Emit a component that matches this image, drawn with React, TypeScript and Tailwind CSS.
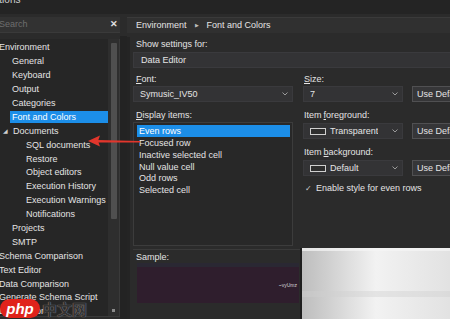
import React from "react";

type Node = { t: string; lvl: number; sel?: boolean; exp?: boolean };

const tree: Node[] = [
  { t: "Environment", lvl: 0 },
  { t: "General", lvl: 1 },
  { t: "Keyboard", lvl: 1 },
  { t: "Output", lvl: 1 },
  { t: "Categories", lvl: 1 },
  { t: "Font and Colors", lvl: 1, sel: true },
  { t: "Documents", lvl: 1, exp: true },
  { t: "SQL documents", lvl: 2 },
  { t: "Restore", lvl: 2 },
  { t: "Object editors", lvl: 2 },
  { t: "Execution History", lvl: 2 },
  { t: "Execution Warnings", lvl: 2 },
  { t: "Notifications", lvl: 2 },
  { t: "Projects", lvl: 1 },
  { t: "SMTP", lvl: 1 },
  { t: "Schema Comparison", lvl: 0 },
  { t: "Text Editor", lvl: 0 },
  { t: "Data Comparison", lvl: 0 },
  { t: "Generate Schema Script", lvl: 0 },
  { t: "Data Editor", lvl: 0 },
];

const items = ["Even rows", "Focused row", "Inactive selected cell", "Null value cell", "Odd rows", "Selected cell"];

function Chevron() {
  return (
    <svg width="6" height="4" viewBox="0 0 6 4" className="shrink-0">
      <path d="M0.5 0.5 L3 3 L5.5 0.5" stroke="#9a9a9a" strokeWidth="1" fill="none" />
    </svg>
  );
}

function Combo({ w, children }: { w: string; children: React.ReactNode }) {
  return (
    <div className={`${w} h-[16px] bg-[#333335] border border-[#3a3a3d] flex items-center pl-[6px] pr-[4px] justify-between`}>
      <div className="flex items-center gap-[4px] truncate">{children}</div>
      <Chevron />
    </div>
  );
}

function UseDef() {
  return (
    <div className="h-[16px] flex-1 ml-[9px] bg-[#363638] border border-[#505052] flex items-center pl-[4px] overflow-hidden whitespace-nowrap">
      Use Default
    </div>
  );
}

function Swatch() {
  return <div className="w-[16px] h-[7px] border border-[#cfcfcf] bg-[#2e2e2e] shrink-0" />;
}

export default function App() {
  return (
    <div className="relative w-[450px] h-[319px] overflow-hidden bg-[#2b2b2b] text-[#e4e4e4] text-[9px] leading-[11px] font-['Liberation_Sans',Arial,sans-serif]">
      {/* title strip */}
      <div className="h-[14px] bg-[#242424] overflow-hidden">
        <div className="ml-[-14px] mt-[-6px] text-[10px] text-[#cfcfcf]">Options</div>
      </div>

      <div className="flex h-[305px] pt-[3px]">
        {/* left panel */}
        <div className="w-[120px] flex flex-col shrink-0">
          <div className="h-[16px] bg-[#323232] border-b border-[#3a3a3a] flex items-center justify-between pr-[2px]">
            <span className="text-[#6e6e6e] ml-[-1px]">Search</span>
            <span className="text-[#e0e0e0] text-[9px] font-bold">✕</span>
          </div>
          <div className="mt-[6px] h-[278px] flex bg-[#262626] border-r border-b border-[#3a3a3a]">
            <div className="flex-1 pt-[2px] overflow-hidden">
              {tree.map((n, i) => (
                <div
                  key={i}
                  className="h-[13.9px] flex items-center whitespace-nowrap"
                  style={{ paddingLeft: n.lvl === 0 ? 0 : n.lvl === 1 ? (n.exp ? 2 : 10) : 24 }}
                >
                  {n.exp && <span className="text-[6px] text-[#cfcfcf] mr-[3px] ml-[1px]">◢</span>}
                  <span
                    className={
                      n.sel
                        ? "bg-[#1c8ee8] text-white pl-[2px] w-[98px] h-[12px] flex items-center"
                        : n.lvl === 0
                        ? "ml-[-1px]"
                        : "pl-[2px]"
                    }
                  >
                    {n.t}
                  </span>
                </div>
              ))}
            </div>
            {/* scrollbar */}
            <div className="w-[11px] bg-[#2e2e2e] flex flex-col items-center pt-[4px] pb-[4px]">
              <div className="w-[6px] h-[176px] bg-[#4f4f4f] rounded-[1px]" />
              <div className="flex-1" />
              <div className="w-[3px] h-[3px] bg-[#8a8a8a]" />
            </div>
          </div>
        </div>

        <div className="w-[7px] bg-[#232323] mt-[19px] shrink-0" />

        {/* right panel */}
        <div className="flex-1 flex flex-col">
          <div className="h-[16px] bg-[#303030] border-t border-[#3a3a3a] flex items-center pl-[9px] gap-[8px] whitespace-nowrap">
            <span>Environment</span>
            <span className="text-[5px] text-[#bdbdbd]">▶</span>
            <span>Font and Colors</span>
          </div>

          <div className="mt-[4px] flex-1 border-l-[3px] border-[#242424] pl-[3px] flex flex-col">
            <div className="h-[12px] flex items-center pl-[3px] mt-[1px]">Show settings for:</div>
            <div className="h-[16px] mt-[2px] bg-[#333335] border border-[#3a3a3d] flex items-center pl-[7px]">Data Editor</div>

            <div className="flex mt-[5px]">
              {/* left column */}
              <div className="w-[160px] flex flex-col">
                <div className="h-[12px] flex items-center pl-[3px]"><span className="underline">F</span>ont:</div>
                <div className="mt-[1px]"><Combo w="w-[160px]">Symusic_IV50</Combo></div>
                <div className="h-[12px] flex items-center pl-[3px] mt-[7px]"><span className="underline">D</span>isplay items:</div>
                <div className="mt-[1px] h-[124px] bg-[#282828] border border-[#3c3c3c] p-[2px] pl-[3px]">
                  {items.map((it, i) => (
                    <div
                      key={i}
                      className={
                        i === 0
                          ? "h-[12px] bg-[#1c8ee8] text-white flex items-center pl-[2px] mb-[1px]"
                          : "h-[11.7px] flex items-center pl-[2px]"
                      }
                    >
                      {it}
                    </div>
                  ))}
                </div>
              </div>

              {/* right column */}
              <div className="flex-1 flex flex-col pl-[10px]">
                <div className="h-[12px] flex items-center pl-[1px]"><span className="underline">S</span>ize:</div>
                <div className="mt-[1px] flex">
                  <Combo w="w-[100px]">7</Combo>
                  <UseDef />
                </div>
                <div className="h-[12px] flex items-center pl-[1px] mt-[7px]">Item <span className="underline ml-[2px]">f</span>oreground:</div>
                <div className="mt-[2px] flex">
                  <Combo w="w-[100px]"><Swatch />Transparent</Combo>
                  <UseDef />
                </div>
                <div className="h-[12px] flex items-center pl-[1px] mt-[7px]">Item <span className="underline ml-[2px]">b</span>ackground:</div>
                <div className="mt-[2px] flex">
                  <Combo w="w-[100px]"><Swatch />Default</Combo>
                  <UseDef />
                </div>
                <div className="h-[12px] flex items-center mt-[6px] pl-[2px] gap-[4px]">
                  <span className="text-[#cfcfcf] text-[8px]">✓</span>
                  <span>Enable style for even rows</span>
                </div>
              </div>
            </div>

            <div className="mt-[3px] border-t border-[#3a3a3a] w-[170px] h-[64px] flex flex-col">
              <div className="h-[12px] flex items-center pl-[3px] mt-[1px]">Sample:</div>
              <div className="mx-[4px] h-[40px] bg-[#2f1e2d] border-t-[4px] border-[#2a2833] flex items-center justify-end pr-[2px]">
                <span className="text-[5px] text-[#d8d8d8]">~vyUmz</span>
              </div>
            </div>
          </div>
        </div>
      </div>

      {/* pixelated overlay bottom right */}
      <div className="absolute left-[300px] top-[248px] w-[150px] h-[71px] border-l-2 border-[#1e1e1e] bg-gradient-to-r from-[#bdbdbd] via-[#f2f2f2] to-[#e2e2e2]">
        <div className="h-[3px] bg-[#f5f5f5] opacity-70" />
        <div className="mt-[40px] h-[6px] bg-[#cfcfcf] opacity-40" />
      </div>

      {/* red arrow */}
      <svg className="absolute left-[86px] top-[133px]" width="56" height="16" viewBox="0 0 56 16">
        <path d="M12 7 L54 8 L54 9.5 L12 9.5 Z" fill="#e2362c" />
        <path d="M2 8 L14 2.5 L12 8 L14 13.5 Z" fill="#e2362c" />
      </svg>

      {/* watermark */}
      <div className="absolute left-[0px] top-[299px] flex items-center gap-[2px]">
        <div className="h-[19px] w-[40px] rounded-full bg-[#e0231b] flex items-center justify-center text-white text-[15px] font-bold italic leading-none font-['Liberation_Sans',sans-serif]">
          php
        </div>
        <div className="text-[15px] font-bold text-[#333333] leading-none font-['Noto_Sans_CJK_SC',sans-serif] [text-shadow:0_0_1px_#b0b0b0]">
          中文网
        </div>
      </div>
    </div>
  );
}
